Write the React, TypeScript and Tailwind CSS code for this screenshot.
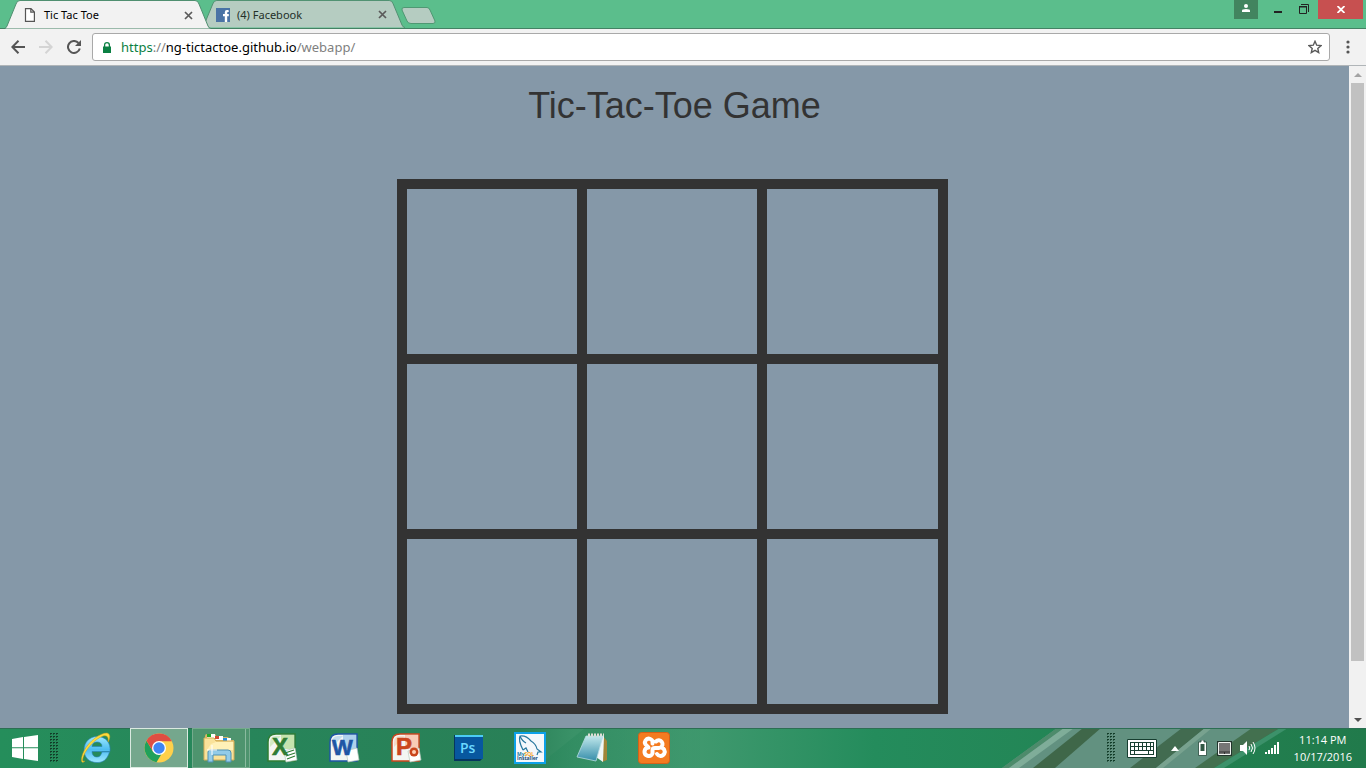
import React from "react";

const browserFont = "font-['Noto_Sans','Open_Sans',sans-serif]";
const desktopFont = "font-['Open_Sans','Noto_Sans',sans-serif]";

function TabShape({ fill }: { fill: string }) {
  return (
    <svg className="absolute inset-0 h-full w-full" viewBox="0 0 206 29" preserveAspectRatio="none" aria-hidden="true">
      <path d="M0 28.500Q1 28 2 26L11 4Q12 .5 15 .5H190Q193 .5 194 4L203 26Q204 28.500 206 28.500" fill={fill} stroke="#4f8f70" />
    </svg>
  );
}

function CloseGlyph() {
  return (
    <svg width="9" height="9" viewBox="0 0 9 9" aria-hidden="true">
      <path d="M1 1L8 8M8 1L1 8" stroke="#5a5a5a" strokeWidth="1.7" />
    </svg>
  );
}

function TitleBar() {
  return (
    <header className="flex h-[29px] shrink-0 items-start border-b border-[#448264] bg-[#5bbe8c]">
      <div className="relative z-10 ml-[5px] flex h-[29px] w-[206px] items-center pt-px pr-[18px] pl-[19px]">
        <TabShape fill="#f2f2f2" />
        <svg className="relative mr-2" width="12" height="14" viewBox="0 0 12 14" aria-hidden="true">
          <path d="M1.500.6H7L10.400 4V13.400H1.500ZM6.800.6V4.200H10.400" fill="#fff" stroke="#555" strokeWidth="1.200" />
        </svg>
        <span className="relative grow text-[11px] leading-4 text-black">Tic Tac Toe</span>
        <button type="button" className="relative" aria-label="Close Tic Tac Toe"><CloseGlyph /></button>
      </div>
      <div className="relative -ml-[9px] flex h-7 w-[203px] items-center pt-px pr-[18px] pl-[14px]">
        <TabShape fill="#b5ccc1" />
        <svg className="relative mr-[7px]" width="14" height="14" viewBox="0 0 14 14" aria-hidden="true">
          <path d="M0 0H14V14H0Z" fill="#4a73a5" />
          <path d="M12.500 2H11Q8.800 2 8.800 4.300V6H7V8.200H8.800V14H11.200V8.200H12.800V6H11.200V4.800Q11.200 4 12 4H12.800Z" fill="#fff" />
        </svg>
        <span className="relative grow text-[11px] leading-4 text-[#233029]">(4) Facebook</span>
        <button type="button" className="relative" aria-label="Close Facebook"><CloseGlyph /></button>
      </div>
      <button type="button" className="-ml-1 mt-[7px]" aria-label="New tab">
        <svg width="35" height="17" viewBox="0 0 35 17" aria-hidden="true">
          <path d="M3 .5H26Q28 .5 29 3L34 14Q34.500 16.500 32 16.500H10Q7 16.500 6 14L1 3Q.5 .5 3 .5Z" fill="#b5ccc1" stroke="#4f9873" />
        </svg>
      </button>
      <div className="ml-auto flex items-start pr-[3px]">
        <button type="button" aria-label="Profile" className="flex h-[19px] w-6 justify-center bg-[#42845f] pt-1">
          <svg width="8" height="8" viewBox="0 0 8 8" aria-hidden="true">
            <path d="M0 8V6.500Q0 5 4 5T8 6.500V8Z" fill="#fff" /><circle cx="4" cy="2" r="2" fill="#fff" />
          </svg>
        </button>
        <button type="button" aria-label="Minimize" className="ml-2 flex h-[19px] w-6 items-center justify-center pt-[5px]">
          <svg width="8" height="2" viewBox="0 0 8 2" aria-hidden="true"><path d="M0 0H8V2H0Z" fill="#222" /></svg>
        </button>
        <button type="button" aria-label="Restore" className="flex h-[19px] w-7 justify-center pt-1">
          <svg width="10" height="10" viewBox="0 0 10 10" aria-hidden="true">
            <path d="M.5 3H7.500V9.500H.5ZM0 2.500H8" fill="none" stroke="#222" /><path d="M2 .5H9.500V8" fill="none" stroke="#222" />
          </svg>
        </button>
        <button type="button" aria-label="Close window" className="flex h-[19px] w-[45px] items-center justify-center bg-[#c75050]">
          <svg width="8" height="7" viewBox="0 0 8 7" aria-hidden="true"><path d="M.5 0L7.500 7M7.500 0L.5 7" stroke="#fff" strokeWidth="1.8" /></svg>
        </button>
      </div>
    </header>
  );
}

function Toolbar() {
  return (
    <nav className="flex h-[37px] shrink-0 items-center border-b border-[#b0b5b8] bg-[#f2f2f2] pl-[11px]">
      <button type="button" aria-label="Back">
        <svg width="14" height="14" viewBox="0 0 14 14" aria-hidden="true"><path d="M14 7H1.500M7.500 .8L1.300 7L7.500 13.200" fill="none" stroke="#555" strokeWidth="2" /></svg>
      </button>
      <button type="button" aria-label="Forward" className="ml-[14px]">
        <svg width="14" height="14" viewBox="0 0 14 14" aria-hidden="true"><path d="M0 7H12.500M6.500 .8L12.700 7L6.500 13.200" fill="none" stroke="#d4d4d4" strokeWidth="2" /></svg>
      </button>
      <button type="button" aria-label="Reload" className="ml-[14px]">
        <svg width="14" height="14" viewBox="0 0 14 14" aria-hidden="true"><path d="M12.800 8.500A6 6 0 1 1 11.500 3" fill="none" stroke="#555" strokeWidth="2" /><path d="M14 0V6H8Z" fill="#555" /></svg>
      </button>
      <div className="ml-[11px] flex h-7 grow items-center rounded-[3px] border border-[#a9a9a9] bg-white pr-[7px] pl-[10px]">
        <svg width="8" height="11" viewBox="0 0 8 11" aria-hidden="true"><path d="M0 4.500H8V11H0Z" fill="#0b8043" /><path d="M1.600 5V3.200Q1.600 .7 4 .7T6.400 3.200V5" fill="none" stroke="#0b8043" strokeWidth="1.300" /></svg>
        <a href="https://ng-tictactoe.github.io/webapp/" className="ml-[10px] grow text-[13px] leading-5 text-[#808080]">
          <span className="text-[#0b8043]">https</span>://<span className="text-black">ng-tictactoe.github.io</span>/webapp/
        </a>
        <button type="button" aria-label="Bookmark this page">
          <svg width="14" height="14" viewBox="0 0 14 14" aria-hidden="true"><path d="M7 1.300L8.700 5.200L13 5.600L9.800 8.400L10.700 12.600L7 10.400L3.300 12.600L4.200 8.400L1 5.600L5.300 5.200Z" fill="none" stroke="#5a5a5a" strokeWidth="1.400" /></svg>
        </button>
      </div>
      <button type="button" aria-label="Menu" className="flex w-9 justify-center">
        <svg width="4" height="14" viewBox="0 0 4 14" aria-hidden="true"><circle cx="2" cy="2" r="1.600" fill="#555" /><circle cx="2" cy="7" r="1.600" fill="#555" /><circle cx="2" cy="12" r="1.600" fill="#555" /></svg>
      </button>
    </nav>
  );
}

function Game() {
  return (
    <main className="flex min-w-0 grow flex-col items-center overflow-hidden bg-[#8598a8]">
      <h1 className="mt-5 text-center font-['Liberation_Sans',Arial,sans-serif] text-[36px] leading-10 text-[#333]">Tic-Tac-Toe Game</h1>
      <div className="mt-[53px] mr-1 grid w-[551px] shrink-0 auto-rows-[165px] grid-cols-[170px_170px_1fr] gap-[10px] bg-[#333] p-[10px]">
        {Array.from({ length: 9 }, (_, i) => (
          <button key={i} type="button" aria-label={`Square ${i + 1}`} className="bg-[#8598a8]" />
        ))}
      </div>
    </main>
  );
}

function Scrollbar() {
  return (
    <div className="flex w-[17px] shrink-0 flex-col items-center bg-[#f1f1f1]" aria-hidden="true">
      <div className="flex h-[17px] shrink-0 items-center"><svg width="8" height="4" viewBox="0 0 8 4"><path d="M0 4L4 0L8 4Z" fill="#a3a3a3" /></svg></div>
      <div className="flex w-full min-h-0 grow flex-col px-[2px]"><div className="h-[92%] bg-[#c1c1c1]" /></div>
      <div className="flex h-[17px] shrink-0 items-center"><svg width="8" height="4" viewBox="0 0 8 4"><path d="M0 0L4 4L8 0Z" fill="#505050" /></svg></div>
    </div>
  );
}

function Grip() {
  return (
    <svg width="8" height="30" viewBox="0 0 8 30" aria-hidden="true">
      {Array.from({ length: 10 }, (_, i) => (
        <g key={i}>
          <path d={`M0 ${i * 3 + 0.5}H8`} stroke="#123c28" strokeDasharray="2 1" />
          <path d={`M0 ${i * 3 + 1.5}H8`} stroke="#123c28" strokeDasharray="1 2" opacity=".6" />
        </g>
      ))}
    </svg>
  );
}

function Backdrop() {
  return (
    <svg className="absolute inset-0 h-full w-full" viewBox="0 0 1366 40" preserveAspectRatio="none" aria-hidden="true">
      <defs>
        <linearGradient id="base" x1="0" x2="1">
          <stop offset="0" stopColor="#258e5b" /><stop offset=".18" stopColor="#27855a" /><stop offset=".38" stopColor="#298057" />
          <stop offset=".42" stopColor="#3a9268" /><stop offset=".5" stopColor="#429a70" /><stop offset=".64" stopColor="#248c5c" /><stop offset="1" stopColor="#217a4b" />
        </linearGradient>
        <linearGradient id="shine" x1="0" x2="1"><stop offset="0" stopColor="#27855a" /><stop offset="1" stopColor="#3c966b" /></linearGradient>
      </defs>
      <path d="M0 0H1366V40H0Z" fill="url(#base)" />
      <path d="M535 40L585 0H700V40Z" fill="url(#shine)" opacity=".5" />
      <path d="M1002 40L1057 0H1275L1212 40Z" fill="#629180" />
      <path d="M1002 40L1057 0H1064L1009 40Z" fill="#4d8b6b" />
      <path d="M1009 40L1064 0H1074L1019 40Z" fill="#7fad99" />
      <path d="M1033 40L1083 0H1101L1055 40Z" fill="#3f6749" />
      <path d="M1130 40L1182 0H1205L1156 40Z" fill="#426b50" />
      <path d="M1156 40L1205 0H1212L1163 40Z" fill="#78a28f" />
      <path d="M1195 40L1252 0H1280L1214 40Z" fill="#43704f" />
      <path d="M1214 40L1280 0H1288L1224 40Z" fill="#3c916a" />
      <path d="M0 .5H1366" stroke="#2c6e53" />
    </svg>
  );
}

function Explorer() {
  return (
    <svg width="33" height="31" viewBox="0 0 33 31" aria-hidden="true">
      <path d="M2 6V3Q2 1 4 1H12L14 4H25L27 7H31V26H2Z" fill="#d9b564" />
      <path d="M4 1H12V5H4Z" fill="#fff" /><path d="M4 1H8V4H4Z" fill="#22a62b" /><path d="M12 3H20V7H12Z" fill="#fff" /><path d="M12 3H16V6H12Z" fill="#d34b35" /><path d="M20 5H28V9H20Z" fill="#fff" /><path d="M20 5H24V8H20Z" fill="#268ddd" />
      <path d="M1 5H11L13 8H31V27H1Z" fill="#f9e29a" stroke="#d4ad57" /><path d="M13 9H30V17H4L8 11Z" fill="#fff1b8" />
      <path d="M5 29V19Q5 17 8 17H25Q28 17 28 20V29H23V22H10V29Z" fill="#92cbe8" stroke="#4e91b4" /><path d="M9 12V22M4 17H14" stroke="#fff" />
    </svg>
  );
}

function Office({ letter, color, light }: { letter: string; color: string; light: string }) {
  return (
    <svg width="31" height="30" viewBox="0 0 31 30" aria-hidden="true">
      <path d="M9 1H28V28H1V9Q1 1 9 1Z" fill="#f3f6f3" stroke={color} strokeWidth="1.500" />
      <path d="M14 2H27V16H14Z" fill={light} opacity=".45" />
      <path d="M3 10Q3 3 9 3H14L3 14Z" fill={light} opacity=".3" />
      <path d="M17 18L28 15L30 27L19 29Z" fill="#fff" stroke="#b6c8bb" strokeWidth=".7" />
      {letter === "P" && <g><circle cx="23" cy="19" r="4.500" fill={color} /><circle cx="23" cy="19" r="2" fill="#ffd0b5" /></g>}
      {letter === "X" && <path d="M18 20L27 17M19 23L28 20M20 26L28 23" stroke={color} strokeWidth="1.300" />}
      <text x={letter === "W" ? 3 : 5} y="22" fontFamily="Liberation Sans, sans-serif" fontWeight="700" fontSize={letter === "W" ? 22 : 24} fill={color} stroke={color} strokeWidth=".6">{letter}</text>
    </svg>
  );
}

function Taskbar() {
  return (
    <footer className={`relative flex h-10 shrink-0 items-center text-white ${desktopFont}`}>
      <Backdrop />
      <div className="relative flex h-full w-full items-center">
        <button type="button" aria-label="Start" className="ml-3">
          <svg width="26" height="26" viewBox="0 0 26 26" aria-hidden="true"><path d="M0 4L11 2V12.300H0ZM12 1.900L26 0V12.300H12ZM0 13.300H11V24L0 22ZM12 13.300H26V26L12 24Z" fill="#fff" /></svg>
        </button>
        <span className="ml-3"><Grip /></span>
        <div className="ml-[10px] flex h-full items-center">
          <button type="button" aria-label="Internet Explorer" className="flex w-14 justify-center">
            <svg width="32" height="32" viewBox="0 0 32 32" aria-hidden="true">
              <defs><linearGradient id="ie" x2="0" y2="1"><stop stopColor="#9ce9ff" /><stop offset=".5" stopColor="#4ebdf1" /><stop offset="1" stopColor="#9ee8ff" /></linearGradient></defs>
              <path d="M29.500 20C27 28 23 30.500 17 30.500C9 30.500 4 25 4 18C4 10 10 4.500 17 4.500C26 4.500 31 11 30 19.500H12C12 23 14 25 17 25C20 25 21 23 22 20ZM12 14.500H22C22 11.500 20 10 17 10C14 10 12 12 12 14.500Z" fill="url(#ie)" stroke="#2682b8" strokeWidth=".6" />
              <path d="M5 29C1 33 0 27 4 19C9 9 20 1 27 1C31 2 30 7 28 10C29 5 27 3 23 4C15 7 7 16 4 23C2 28 2 30 5 29Z" fill="#ffdb3b" stroke="#c69e20" strokeWidth=".5" />
            </svg>
          </button>
          <button type="button" aria-label="Chrome" className="ml-[6px] flex h-10 w-[58px] items-center justify-center border border-[#dae9e0] bg-[#75a78d]">
            <svg width="30" height="30" viewBox="0 0 30 30" aria-hidden="true">
              <circle cx="15" cy="15" r="14.500" fill="#ffd04b" />
              <path d="M2.500 7.700A14.500 14.500 0 0 0 12.500 29.300L19 18.500L9 18.500Z" fill="#20a15b" />
              <path d="M2.500 7.700A14.500 14.500 0 0 1 27.900 8.300H15L9 18.500Z" fill="#df4e43" />
              <circle cx="15" cy="15" r="7" fill="#fff" /><circle cx="15" cy="15" r="5.700" fill="#4085f4" />
            </svg>
          </button>
          <div className="ml-1 flex h-10 border border-[#75ab8d] bg-[#4e946e]">
            <button type="button" aria-label="File Explorer" className="flex w-[53px] items-center justify-center border-r border-[#8bbb9f]"><Explorer /></button><span className="w-[3px]" />
          </div>
          <div className="ml-px flex items-center">
            <button type="button" aria-label="Excel" className="flex w-[62px] justify-center"><Office letter="X" color="#2f7d34" light="#8fcd5b" /></button>
            <button type="button" aria-label="Word" className="flex w-[62px] justify-center"><Office letter="W" color="#1e55a5" light="#5aa3e5" /></button>
            <button type="button" aria-label="PowerPoint" className="flex w-[62px] justify-center"><Office letter="P" color="#ca461d" light="#ff996c" /></button>
            <button type="button" aria-label="Photoshop" className="flex w-[62px] justify-center">
              <svg width="31" height="28" viewBox="0 0 31 28" aria-hidden="true"><path d="M1 1H29V25L27 27H1Z" fill="#06365f" /><path d="M2 1H30V25H2Z" fill="#07579f" /><path d="M2 1H30V3H2Z" fill="#4bccf4" /><text x="7" y="19" fontFamily="Open Sans, sans-serif" fontWeight="600" fontSize="14" fill="#6cd9ff">Ps</text></svg>
            </button>
            <button type="button" aria-label="MySQL Installer" className="flex w-[62px] justify-center">
              <svg width="32" height="32" viewBox="0 0 32 32" aria-hidden="true"><path d="M1 1H31V31H1Z" fill="#f4f8fb" stroke="#0da1e8" strokeWidth="2" /><path d="M9 18Q4 8 6 4Q12 3 17 9Q22 12 23 17L27 20L24 20L23 23M6 4Q8 9 12 11M9 18L12 16L14 20" fill="none" stroke="#27779e" strokeWidth="1.200" /><text x="3" y="24" fontFamily="Open Sans, sans-serif" fontSize="5" fontWeight="700" fill="#2678a0">My<tspan fill="#f6a01a">SQL</tspan></text><text x="3" y="28" fontFamily="Open Sans, sans-serif" fontSize="5" fontWeight="700" fill="#164b78">Installer</text></svg>
            </button>
            <button type="button" aria-label="Notepad" className="flex w-[62px] justify-center">
              <svg width="32" height="30" viewBox="0 0 32 30" aria-hidden="true"><defs><linearGradient id="note" x2="0" y2="1"><stop stopColor="#c1e8ec" /><stop offset="1" stopColor="#358da9" /></linearGradient></defs><path d="M27 3L31 8V27L26 29Z" fill="#a18538" /><path d="M11 3H28L27 29L20 24Z" fill="#f0f7f8" /><path d="M10 3H27L20 28L1 24Z" fill="url(#note)" stroke="#b8dce2" strokeWidth=".8" /><path d="M12 2H28" stroke="#deded6" strokeWidth="3" strokeDasharray="2 1" /></svg>
            </button>
            <button type="button" aria-label="XAMPP" className="flex w-[62px] justify-center">
              <svg width="32" height="32" viewBox="0 0 32 32" aria-hidden="true"><rect x=".5" y=".5" width="31" height="31" rx="3" fill="#f47b20" stroke="#d76117" /><path d="M14.500 11.500A3.800 3.800 0 1 0 8.500 13.500L10.500 15.500A4.200 4.200 0 1 0 14.500 21.500V18Q14.500 16 17 16H21M18 9.500A3.800 3.800 0 1 1 22.500 15.500A4.200 4.200 0 1 1 19 22" fill="none" stroke="#fff" strokeWidth="4" strokeLinejoin="round" strokeLinecap="round" /></svg>
            </button>
          </div>
        </div>
        <div className="ml-auto flex items-center pr-[14px]">
          <Grip />
          <button type="button" aria-label="Touch keyboard" className="ml-3">
            <svg width="30" height="19" viewBox="0 0 30 19" aria-hidden="true"><path d="M.5 .5H29.500V18.500H.5Z" fill="#fff" stroke="#173e30" /><path d="M3 3H27V16H3Z" fill="#173e30" /><path d="M4 5.500H26M4 9.500H26" stroke="#fff" strokeWidth="3" strokeDasharray="3 1" /><path d="M4 13.500H7M8 13.500H21M22 13.500H26" stroke="#fff" strokeWidth="3" /></svg>
          </button>
          <button type="button" aria-label="Show hidden icons" className="ml-[14px]"><svg width="8" height="5" viewBox="0 0 8 5" aria-hidden="true"><path d="M0 5L4 0L8 5Z" fill="#fff" /></svg></button>
          <svg className="ml-[19px]" width="9" height="16" viewBox="0 0 9 16" aria-hidden="true"><path d="M3 0H6V2H8.500V15.500H.5V2H3Z" fill="#fff" stroke="#25483a" strokeWidth=".8" /><path d="M2.500 4H6.500V11H2.500Z" fill="#315744" /></svg>
          <svg className="ml-[10px]" width="15" height="15" viewBox="0 0 15 15" aria-hidden="true"><path d="M0 0H15V15H0Z" fill="#22362d" /><path d="M1.500 1.500H13.500V13.500H1.500Z" fill="#767676" stroke="#f0f4f1" /><path d="M2 11H13M7.500 11V13" stroke="#333" /></svg>
          <svg className="ml-2" width="16" height="14" viewBox="0 0 16 14" aria-hidden="true"><path d="M0 4H3L7 0V14L3 10H0Z" fill="#fff" /><path d="M9 5Q10.500 7 9 9M11 3Q14 7 11 11M13 1Q17 7 13 13" fill="none" stroke="#fff" /></svg>
          <svg className="ml-[9px]" width="15" height="12" viewBox="0 0 15 12" aria-hidden="true"><path d="M0 10H2V12H0ZM3 8H5V12H3ZM6 6H8V12H6ZM9 3H11V12H9ZM12 0H14V12H12Z" fill="#fff" /></svg>
          <div className="ml-[14px] text-center text-[11px] leading-[17px]"><div>11:14 PM</div><div>10/17/2016</div></div>
        </div>
      </div>
    </footer>
  );
}

export default function App() {
  return (
    <div className={`flex h-screen flex-col overflow-hidden ${browserFont}`}>
      <TitleBar />
      <Toolbar />
      <div className="flex min-h-0 grow"><Game /><Scrollbar /></div>
      <Taskbar />
    </div>
  );
}
